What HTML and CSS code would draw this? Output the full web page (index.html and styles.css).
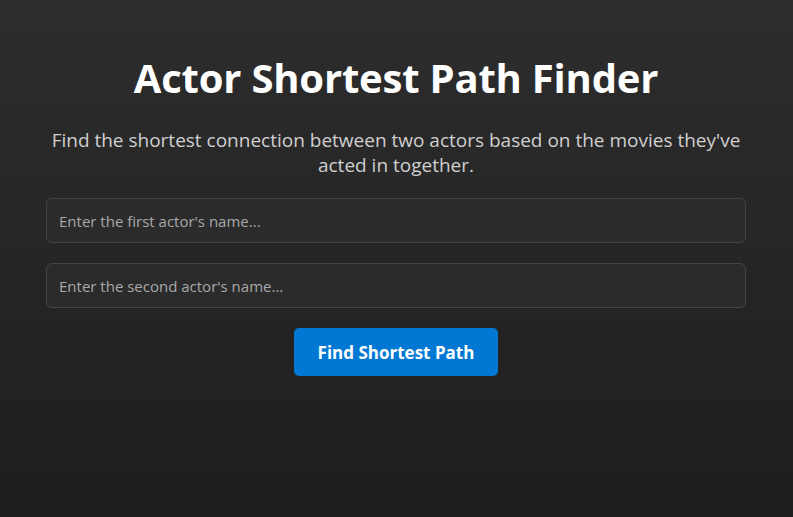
FILE: index.html
```html
<!DOCTYPE html>
<html lang="en">
<head>
<meta charset="utf-8">
<title>Actor Shortest Path Finder</title>
<link rel="stylesheet" href="styles.css">
</head>
<body>
<main class="container">
  <h1 class="title">Actor Shortest Path Finder</h1>
  <p class="subtitle">Find the shortest connection between two actors based on the movies they've acted in together.</p>
  <form class="form">
    <input class="field" type="text" placeholder="Enter the first actor's name...">
    <input class="field" type="text" placeholder="Enter the second actor's name...">
    <button class="btn" type="button">Find Shortest Path</button>
  </form>
</main>
</body>
</html>
```

FILE: styles.css
```css
html, body {
  margin: 0;
  padding: 0;
  height: 100%;
}
body {
  box-sizing: border-box;
  padding-right: 1px;
  background: linear-gradient(180deg, #2d2d2d 0%, #1e1e1e 100%);
  font-family: "Open Sans", "Noto Sans", sans-serif;
  color: #fff;
}
.container {
  max-width: 700px;
  margin: 0 auto;
  padding-top: 54px;
  display: flex;
  flex-direction: column;
  align-items: stretch;
  text-align: center;
}
.title {
  margin: 0;
  font-size: 40px;
  font-weight: 700;
  line-height: 48px;
  letter-spacing: -0.2px;
}
.subtitle {
  margin: 26px 0 0;
  font-size: 19px;
  line-height: 25px;
  color: #cfcfcf;
}
.form {
  margin-top: 20px;
  display: flex;
  flex-direction: column;
  align-items: center;
  gap: 20px;
}
.field {
  box-sizing: border-box;
  width: 100%;
  height: 45px;
  padding: 0 12px;
  background: #2b2b2b;
  border: 1px solid #444;
  border-radius: 6px;
  color: #ddd;
  font-family: inherit;
  font-size: 15px;
  outline: none;
}
.field::placeholder {
  color: #a8a8a8;
}
.btn {
  box-sizing: border-box;
  width: 204px;
  height: 48px;
  border: none;
  border-radius: 5px;
  background: #0078d4;
  color: #fff;
  font-family: inherit;
  font-size: 17px;
  font-weight: 700;
}
```
